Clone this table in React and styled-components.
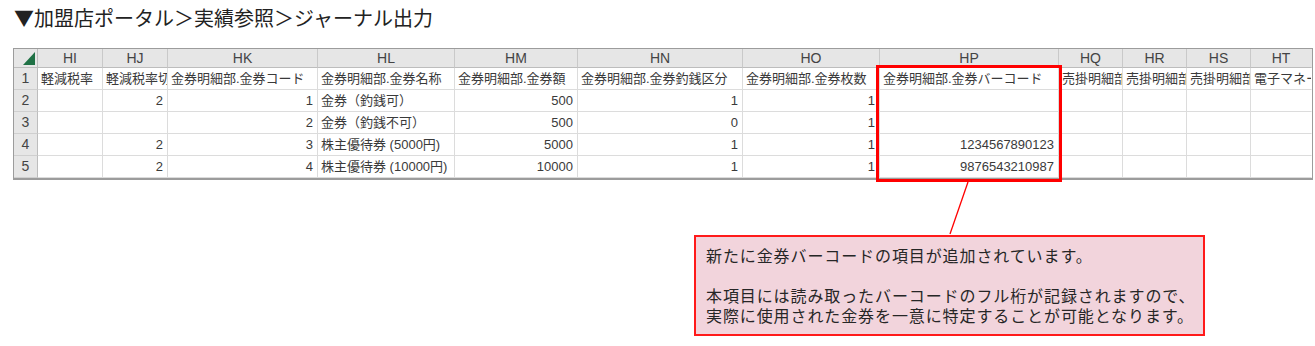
import React from 'react';
import styled, { createGlobalStyle } from 'styled-components';

const GlobalStyle = createGlobalStyle`
  html, body {
    margin: 0;
    padding: 0;
    background: #ffffff;
  }
  body {
    font-family: "Noto Sans CJK JP", "Noto Sans", sans-serif;
  }
`;

const Page = styled.div`
  position: relative;
  width: 1315px;
  height: 346px;
  overflow: hidden;
`;

const Title = styled.h1`
  margin: 0;
  padding-left: 14px;
  height: 35px;
  line-height: 35px;
  font-size: 20px;
  font-weight: 400;
  color: #222;
  font-family: "Noto Sans CJK JP", sans-serif;
`;

const Sheet = styled.div`
  display: grid;
  grid-template-columns: 24px 65px 65px 150px 137px 123px 165px 137px 179px 64px 64px 64px 61px;
  grid-template-rows: 19px repeat(5, 22px);
  width: 1298px;
  margin: 13px 0 0 13px;
  border: 1px solid #9c9c9c;
  border-bottom-width: 2px;
  font-family: "Liberation Sans", "Noto Sans CJK JP", sans-serif;
  font-size: 13px;
`;

const Corner = styled.div`
  box-sizing: border-box;
  background: #e6e6e6;
  border-right: 1px solid #bdbdbd;
  border-bottom: 1px solid #bdbdbd;
  display: flex;
  align-items: flex-end;
  justify-content: flex-end;
  padding: 0 2px 2px 0;
`;

const ColHead = styled.div`
  box-sizing: border-box;
  background: #e6e6e6;
  border-right: 1px solid ${(p) => (p.$last ? 'transparent' : '#c9c9c9')};
  border-bottom: 1px solid #bdbdbd;
  color: #444;
  font-size: 14px;
  text-align: center;
  line-height: 18px;
`;

const RowHead = styled.div`
  box-sizing: border-box;
  background: #e6e6e6;
  border-right: 1px solid #bdbdbd;
  border-bottom: 1px solid #cfcfcf;
  color: #444;
  font-size: 14px;
  text-align: center;
  line-height: 21px;
`;

const Cell = styled.div`
  box-sizing: border-box;
  border-right: 1px solid ${(p) => (p.$last ? 'transparent' : '#dcdcdc')};
  border-bottom: 1px solid #dcdcdc;
  color: #3a3a3a;
  padding: 0 4px 0 3px;
  line-height: 21px;
  white-space: nowrap;
  overflow: hidden;
  text-align: ${(p) => (p.$num ? 'right' : 'left')};
`;

const Highlight = styled.div`
  position: absolute;
  left: 876px;
  top: 65px;
  width: 186px;
  height: 117px;
  box-sizing: border-box;
  border: 3px solid #ff0000;
`;

const Connector = styled.svg`
  position: absolute;
  left: 0;
  top: 0;
  pointer-events: none;
`;

const Callout = styled.div`
  box-sizing: border-box;
  width: 511px;
  height: 101px;
  margin: 55px 0 0 694px;
  background: #f2d4dc;
  border: 2px solid #ff1a1a;
  padding: 8px 0 0 10px;
  color: #262626;
  font-size: 16px;
  line-height: 20px;
  letter-spacing: 0.9px;
  font-family: "Noto Sans CJK JP", sans-serif;
`;

const Para = styled.p`
  margin: 0 0 20px;
  &:last-child {
    margin: 0;
  }
`;

const columns = ['HI', 'HJ', 'HK', 'HL', 'HM', 'HN', 'HO', 'HP', 'HQ', 'HR', 'HS', 'HT'];

const rows = [
  [
    '軽減税率',
    '軽減税率切',
    '金券明細部.金券コード',
    '金券明細部.金券名称',
    '金券明細部.金券額',
    '金券明細部.金券釣銭区分',
    '金券明細部.金券枚数',
    '金券明細部.金券バーコード',
    '売掛明細部',
    '売掛明細部',
    '売掛明細部',
    '電子マネー',
  ],
  ['', '2', '1', '金券（釣銭可）', '500', '1', '1', '', '', '', '', ''],
  ['', '', '2', '金券（釣銭不可）', '500', '0', '1', '', '', '', '', ''],
  ['', '2', '3', '株主優待券 (5000円)', '5000', '1', '1', '1234567890123', '', '', '', ''],
  ['', '2', '4', '株主優待券 (10000円)', '10000', '1', '1', '9876543210987', '', '', '', ''],
];

const App = () => {
  return (
    <Page>
      <GlobalStyle />
      <Title>▼加盟店ポータル＞実績参照＞ジャーナル出力</Title>
      <Sheet>
        <Corner>
          <svg width="12" height="13" viewBox="0 0 12 13">
            <polygon points="12,0 12,13 0,13" fill="#1f7145" />
          </svg>
        </Corner>
        {columns.map((c, i) => (
          <ColHead key={c} $last={i === columns.length - 1}>
            {c}
          </ColHead>
        ))}
        {rows.map((row, r) => (
          <React.Fragment key={r}>
            <RowHead>{r + 1}</RowHead>
            {row.map((v, i) => (
              <Cell key={i} $num={/^\d+$/.test(v)} $last={i === row.length - 1}>
                {v}
              </Cell>
            ))}
          </React.Fragment>
        ))}
      </Sheet>
      <Callout>
        <Para>新たに金券バーコードの項目が追加されています。</Para>
        <Para>
          本項目には読み取ったバーコードのフル桁が記録されますので、
          <br />
          実際に使用された金券を一意に特定することが可能となります。
        </Para>
      </Callout>
      <Highlight />
      <Connector width="1315" height="346">
        <line x1="968" y1="182" x2="950" y2="234" stroke="#ff0000" strokeWidth="1.3" />
      </Connector>
    </Page>
  );
};

export default App;
